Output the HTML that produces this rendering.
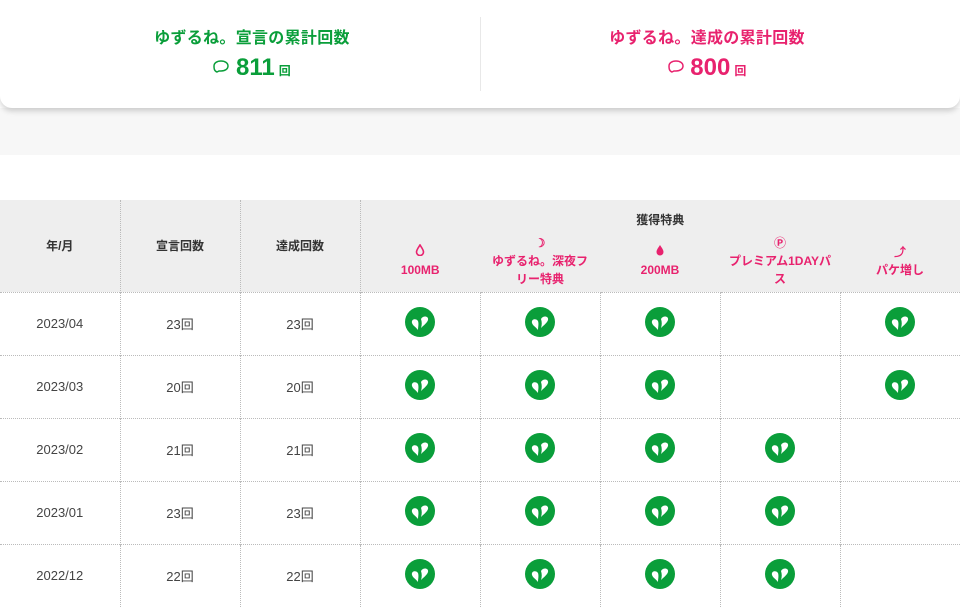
<!DOCTYPE html>
<html><head><meta charset="utf-8"><style>
*{margin:0;padding:0;box-sizing:border-box}
body{width:960px;height:606px;overflow:hidden;background:#fff;font-family:"Liberation Sans","Noto Sans CJK JP",sans-serif;color:#333}
.card{position:absolute;left:0;top:0;width:960px;height:108px;background:#fff;border-radius:0 0 12px 12px;box-shadow:0 3px 6px rgba(0,0,0,.18);z-index:2}
.half{position:absolute;top:0;width:480px;height:108px;text-align:center}
.half h2{font-size:16px;font-weight:bold;margin-top:24px;letter-spacing:.3px}
.half .n{margin-top:6px;font-size:24px;font-weight:bold}
.half .n small{font-size:12px;margin-left:4px}
.g{color:#0a9e3a}.p{color:#e8226e}
.div{position:absolute;left:480px;top:17px;width:1px;height:74px;background:#e8e8e8}
.band{position:absolute;left:0;top:108px;width:960px;height:47px;background:#f7f7f7}
table{position:absolute;left:0;top:200px;width:960px;border-collapse:collapse;table-layout:fixed;font-size:13px}
th{background:#eee;font-weight:bold;font-size:12px;color:#333;vertical-align:middle}
th.b{border-left:1px dotted #bbb}
td:first-child{border-left:none}
td{height:63px;text-align:center;border-left:1px dotted #bbb;border-top:1px dotted #bbb;color:#444}
.pk{color:#e8226e;font-size:12px;line-height:18px;font-weight:bold}
</style></head><body>
<div class="card">
 <div class="half g" style="left:12px"><h2>ゆずるね。宣言の累計回数</h2><div class="n"><svg width="16" height="14" viewBox="0 0 16 14" style="vertical-align:1px"><path d="M4 12c-3-1-3-4-3-6C1 3 4 1 8 1s7 2 7 5-3 5-7 5H6z" fill="none" stroke="currentColor" stroke-width="1.5"/></svg> 811<small>回</small></div></div>
 <div class="div"></div>
 <div class="half p" style="left:467px"><h2>ゆずるね。達成の累計回数</h2><div class="n"><svg width="16" height="14" viewBox="0 0 16 14" style="vertical-align:1px"><path d="M4 12c-3-1-3-4-3-6C1 3 4 1 8 1s7 2 7 5-3 5-7 5H6z" fill="none" stroke="currentColor" stroke-width="1.5"/></svg> 800<small>回</small></div></div>
</div>
<div class="band"></div>
<svg width="0" height="0" style="position:absolute"><defs><symbol id="ic" viewBox="0 0 30 30"><circle cx="15" cy="15" r="15" fill="#0a9e3a"/><path d="M13 14c-2-3-7-2-6 2 1 3 4 4 6 7 0-3 1-6 0-9zM16 12c2-4 8-3 7 1-1 3-4 5-7 8 1-3 1-6 0-9z" fill="#fff"/></symbol></defs></svg>
<table>
<colgroup><col span="8" style="width:120px"></colgroup>
<tr style="height:30px"><th rowspan="2">年/月</th><th rowspan="2" class="b">宣言回数</th><th rowspan="2" class="b">達成回数</th><th colspan="5" class="b" style="padding-top:8px">獲得特典</th></tr>
<tr style="height:62px"><th class="pk b"><svg width="10" height="12" viewBox="0 0 10 12"><path d="M5 1C3 4 1.5 6 1.5 8a3.5 3.5 0 0 0 7 0C8.5 6 7 4 5 1z" fill="none" stroke="#e8226e" stroke-width="1.6"/></svg><br>100MB</th><th class="pk">☽<br>ゆずるね。深夜フ<br>リー特典</th><th class="pk"><svg width="10" height="12" viewBox="0 0 10 12"><path d="M5 1C3 4 1.5 6 1.5 8a3.5 3.5 0 0 0 7 0C8.5 6 7 4 5 1z" fill="#e8226e"/></svg><br>200MB</th><th class="pk">Ⓟ<br>プレミアム1DAYパ<br>ス</th><th class="pk">⤴<br>パケ増し</th></tr>
<tr><td>2023/04</td><td>23回</td><td>23回</td><td><svg width="30" height="30"><use href="#ic"/></svg></td><td><svg width="30" height="30"><use href="#ic"/></svg></td><td><svg width="30" height="30"><use href="#ic"/></svg></td><td></td><td><svg width="30" height="30"><use href="#ic"/></svg></td></tr>
<tr><td>2023/03</td><td>20回</td><td>20回</td><td><svg width="30" height="30"><use href="#ic"/></svg></td><td><svg width="30" height="30"><use href="#ic"/></svg></td><td><svg width="30" height="30"><use href="#ic"/></svg></td><td></td><td><svg width="30" height="30"><use href="#ic"/></svg></td></tr>
<tr><td>2023/02</td><td>21回</td><td>21回</td><td><svg width="30" height="30"><use href="#ic"/></svg></td><td><svg width="30" height="30"><use href="#ic"/></svg></td><td><svg width="30" height="30"><use href="#ic"/></svg></td><td><svg width="30" height="30"><use href="#ic"/></svg></td><td></td></tr>
<tr><td>2023/01</td><td>23回</td><td>23回</td><td><svg width="30" height="30"><use href="#ic"/></svg></td><td><svg width="30" height="30"><use href="#ic"/></svg></td><td><svg width="30" height="30"><use href="#ic"/></svg></td><td><svg width="30" height="30"><use href="#ic"/></svg></td><td></td></tr>
<tr><td>2022/12</td><td>22回</td><td>22回</td><td><svg width="30" height="30"><use href="#ic"/></svg></td><td><svg width="30" height="30"><use href="#ic"/></svg></td><td><svg width="30" height="30"><use href="#ic"/></svg></td><td><svg width="30" height="30"><use href="#ic"/></svg></td><td></td></tr>
</table>
</body></html>
